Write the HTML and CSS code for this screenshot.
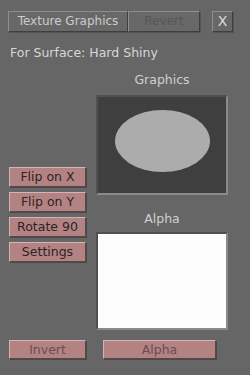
FILE: index.html
```html
<!DOCTYPE html>
<html>
<head>
  <meta charset="UTF-8">
  <title>Texture Graphics</title>
  <link rel="stylesheet" href="styles.css">
</head>
<body>
  <div class="top">
    <div class="tabs">
      <div class="tab active">Texture Graphics</div>
      <div class="tab disabled">Revert</div>
    </div>
    <div class="tab close">X</div>
  </div>

  <div class="surface">For Surface: Hard Shiny</div>

  <div class="main">
    <div class="tools">
      <div class="btn">Flip on X</div>
      <div class="btn">Flip on Y</div>
      <div class="btn">Rotate 90</div>
      <div class="btn">Settings</div>
    </div>
    <div class="views">
      <div class="label">Graphics</div>
      <div class="box graphics">
        <div class="shape"></div>
      </div>
      <div class="label alpha-label">Alpha</div>
      <div class="box alpha"></div>
    </div>
  </div>

  <div class="bottom">
    <div class="btn dim invert">Invert</div>
    <div class="btn dim alpha-btn">Alpha</div>
  </div>
</body>
</html>
```
FILE: styles.css
```css
html, body {
  margin: 0;
  padding: 0;
}
body {
  width: 250px;
  height: 375px;
  overflow: hidden;
  background: #666666;
  font-family: "DejaVu Sans", Verdana, sans-serif;
  font-size: 12.5px;
  color: #d4d4d4;
}
.top {
  display: flex;
  padding: 11px 0 0 8px;
}
.tabs {
  display: flex;
  width: 192px;
}
.tab {
  box-sizing: border-box;
  height: 21px;
  line-height: 19px;
  text-align: center;
  background: #686868;
  border: 1px solid;
  border-color: #8e8e8e #3e3e3e #3e3e3e #8e8e8e;
  box-shadow: 1px 1px 0 #555;
  font-size: 12px;
}
.tab.active {
  width: 120px;
  color: #cccccc;
}
.tab.disabled {
  width: 72px;
  color: #575757;
}
.close {
  width: 21px;
  margin-left: 12px;
  font-size: 14px;
  color: #dcdcdc;
}
.surface {
  margin: 14px 0 0 10px;
  line-height: 14px;
  color: #d6d6d6;
}
.main {
  display: flex;
  padding-left: 9px;
  margin-top: 12px;
}
.tools {
  width: 77px;
  margin-top: 95px;
  display: flex;
  flex-direction: column;
  gap: 5px;
}
.btn {
  box-sizing: border-box;
  height: 20px;
  line-height: 18px;
  text-align: center;
  background: #b38384;
  border: 1px solid;
  border-color: #d6b4b4 #5a4646 #5a4646 #d6b4b4;
  box-shadow: 1px 1px 0 #4a4a4a;
  color: #2e2224;
  font-size: 12.5px;
}
.views {
  width: 132px;
  margin-left: 10px;
}
.label {
  height: 16px;
  line-height: 16px;
  text-align: center;
  color: #d0d0d0;
  font-size: 12.5px;
}
.box {
  box-sizing: border-box;
  border: 2px solid;
  border-color: #505050 #8a8a8a #8a8a8a #505050;
  margin-top: 7px;
}
.graphics {
  height: 100px;
  background: #3f3f3f;
  padding-top: 13px;
}
.shape {
  width: 95px;
  height: 62px;
  margin: 0 auto;
  border-radius: 50%;
  background: #acacac;
}
.alpha-label {
  margin-top: 16px;
}
.box.alpha {
  height: 98px;
  margin-top: 5px;
  background: #fdfdfd;
}
.bottom {
  display: flex;
  padding-left: 9px;
  margin-top: 10px;
}
.btn.dim {
  height: 19px;
  line-height: 17px;
  color: #6c4c4e;
}
.invert {
  width: 77px;
}
.alpha-btn {
  width: 113px;
  margin-left: 17px;
}
```
